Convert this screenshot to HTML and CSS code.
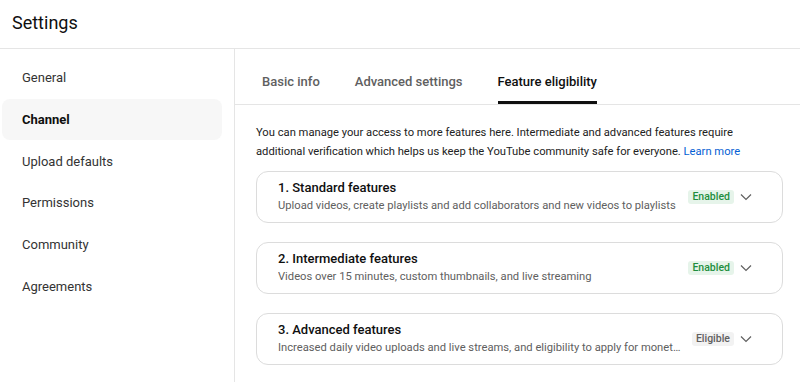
FILE: index.html
```html
<!DOCTYPE html>
<html lang="en">
<head>
    <meta charset="UTF-8">
    <meta name="viewport" content="width=device-width, initial-scale=1.0">
    <title>Settings</title>
    <link rel="stylesheet" href="styles.css">
</head>
<body>
    <!-- Cabecera -->
    <header class="header">
        <h1 class="header-title">Settings</h1>
    </header>

    <div class="layout">
        <!-- Menú lateral -->
        <nav class="sidebar">
            <a class="side-item">General</a>
            <a class="side-item active">Channel</a>
            <a class="side-item">Upload defaults</a>
            <a class="side-item">Permissions</a>
            <a class="side-item">Community</a>
            <a class="side-item">Agreements</a>
        </nav>

        <!-- Contenido principal -->
        <main class="content">
            <div class="tabs">
                <span class="tab">Basic info</span>
                <span class="tab">Advanced settings</span>
                <span class="tab active">Feature eligibility</span>
            </div>

            <div class="panel">
                <p class="intro">You can manage your access to more features here. Intermediate and advanced features require additional verification which helps us keep the YouTube community safe for everyone. <a class="link">Learn more</a></p>

                <div class="card">
                    <div class="card-text">
                        <div class="card-title">1. Standard features</div>
                        <div class="card-sub">Upload videos, create playlists and add collaborators and new videos to playlists</div>
                    </div>
                    <span class="badge enabled">Enabled</span>
                    <svg class="chevron" width="12" height="8" viewBox="0 0 12 8"><path d="M1 1.5l5 5 5-5" fill="none" stroke="#606060" stroke-width="1.2"/></svg>
                </div>

                <div class="card">
                    <div class="card-text">
                        <div class="card-title">2. Intermediate features</div>
                        <div class="card-sub">Videos over 15 minutes, custom thumbnails, and live streaming</div>
                    </div>
                    <span class="badge enabled">Enabled</span>
                    <svg class="chevron" width="12" height="8" viewBox="0 0 12 8"><path d="M1 1.5l5 5 5-5" fill="none" stroke="#606060" stroke-width="1.2"/></svg>
                </div>

                <div class="card">
                    <div class="card-text">
                        <div class="card-title">3. Advanced features</div>
                        <div class="card-sub">Increased daily video uploads and live streams, and eligibility to apply for monetization</div>
                    </div>
                    <span class="badge eligible">Eligible</span>
                    <svg class="chevron" width="12" height="8" viewBox="0 0 12 8"><path d="M1 1.5l5 5 5-5" fill="none" stroke="#606060" stroke-width="1.2"/></svg>
                </div>
            </div>
        </main>
    </div>
</body>
</html>
```

FILE: styles.css
```css
/* Estilos básicos */
body {
    margin: 0;
    font-family: Roboto, "Liberation Sans", Arial, sans-serif;
    color: #0f0f0f;
    background-color: #fff;
    height: 382px;
    overflow: hidden;
}
/* Cabecera */
.header {
    height: 49px;
    border-bottom: 1px solid #e5e5e5;
    display: flex;
    align-items: center;
    padding: 0 12px 4px;
    box-sizing: border-box;
}
.header-title {
    margin: 0;
    font-size: 18px;
    font-weight: 400;
}
/* Estructura */
.layout {
    display: flex;
    height: 333px;
}
/* Menú lateral */
.sidebar {
    width: 234px;
    border-right: 1px solid #e5e5e5;
    padding-top: 8px;
    display: flex;
    flex-direction: column;
    flex-shrink: 0;
}
.side-item {
    height: 41.7px;
    width: 220px;
    margin-left: 2px;
    box-sizing: border-box;
    padding-left: 20px;
    display: flex;
    align-items: center;
    font-size: 13px;
    color: #333;
    border-radius: 8px;
}
.side-item.active {
    background-color: #f7f7f7;
    font-weight: 700;
    color: #0f0f0f;
}
/* Contenido */
.content {
    flex: 1;
    min-width: 0;
}
.tabs {
    height: 55px;
    border-bottom: 1px solid #e5e5e5;
    padding-left: 27px;
    display: flex;
    gap: 35px;
}
.tab {
    font-size: 13px;
    font-weight: 500;
    line-height: 16px;
    color: #606060;
    padding-top: 25px;
    box-sizing: border-box;
    border-bottom: 3px solid transparent;
}
.tab.active {
    color: #0f0f0f;
    border-bottom-color: #0f0f0f;
}
.panel {
    padding: 0 17px 0 21px;
}
.intro {
    margin: 18px 0 10px;
    font-size: 11.2px;
    line-height: 19px;
    color: #222;
}
.link {
    color: #065fd4;
}
/* Tarjetas */
.card {
    height: 52px;
    box-sizing: border-box;
    border: 1px solid #dcdcdc;
    border-radius: 12px;
    display: flex;
    align-items: center;
    padding: 0 30px 0 21px;
    margin-bottom: 19px;
}
.card-text {
    flex: 1;
    min-width: 0;
    padding-right: 10px;
}
.card-title {
    font-size: 13px;
    font-weight: 500;
    line-height: 18px;
}
.card-sub {
    font-size: 11.2px;
    line-height: 18px;
    color: #606060;
    white-space: nowrap;
    overflow: hidden;
    text-overflow: ellipsis;
}
.badge {
    font-size: 10.5px;
    font-weight: 500;
    line-height: 14px;
    padding: 0 4px;
    border-radius: 3px;
    margin-right: 6px;
    flex-shrink: 0;
}
.badge.enabled {
    background-color: #e6f4ea;
    color: #1e8e3e;
}
.badge.eligible {
    background-color: #f2f2f2;
    color: #606060;
}
.chevron {
    flex-shrink: 0;
}
```
